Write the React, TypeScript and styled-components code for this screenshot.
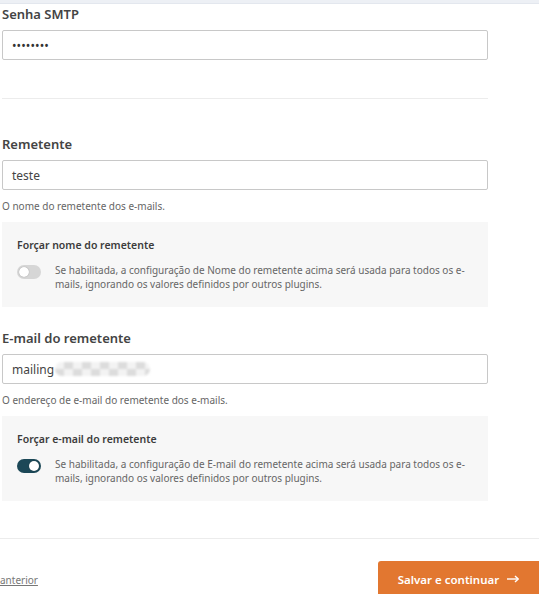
import React from "react";
import styled, { createGlobalStyle } from "styled-components";

const Global = createGlobalStyle`
  html, body { margin: 0; padding: 0; background: #fff; }
  body { font-family: "Noto Sans", "Open Sans", sans-serif; color: #333; width: 539px; overflow: hidden; }
`;

const TopBar = styled.div`
  height: 3px;
  background: #edf0f5;
  border-bottom: 1px solid #e3e7ee;
`;

const Column = styled.div`
  width: 486px;
  margin-left: 2px;
`;

const Field = styled.div`
  display: flex;
  flex-direction: column;
`;

const Label = styled.label<{ $top?: number }>`
  font-size: 13px;
  font-weight: 600;
  color: #444;
  margin-top: ${(p) => p.$top ?? 0}px;
  line-height: 18px;
  margin-bottom: 7px;
`;

const Input = styled.div`
  height: 30px;
  box-sizing: border-box;
  border: 1px solid #c8c8c8;
  border-radius: 2px;
  display: flex;
  align-items: center;
  padding: 0 9px;
  font-size: 12px;
  color: #444;
`;

const Dots = styled.span`
  font-size: 12px;
  letter-spacing: 0.1px;
  color: #333;
`;

const Blur = styled.span`
  display: inline-block;
  width: 95px;
  height: 14px;
  margin-left: 1px;
  border-radius: 7px;
  background: repeating-conic-gradient(#dcdcdc 0 25%, #f3f3f3 0 50%) 0 0 / 18px 14px;
  filter: blur(1px);
`;

const Divider = styled.hr<{ $full?: boolean }>`
  border: 0;
  border-top: 1px solid #ececec;
  margin: 0;
  width: ${(p) => (p.$full ? "539px" : "486px")};
`;

const Spacer = styled.div<{ $h: number }>`
  height: ${(p) => p.$h}px;
`;

const Help = styled.p`
  font-size: 10px;
  color: #666;
  margin: 9px 0 0;
  line-height: 14px;
`;

const Option = styled.div`
  background: #f7f7f7;
  margin-top: 9px;
  padding: 16px 15px 16px;
`;

const OptionTitle = styled.div`
  font-size: 10.5px;
  font-weight: 600;
  color: #3c3c3c;
  line-height: 14px;
  margin-bottom: 11px;
`;

const OptionRow = styled.div`
  display: flex;
  align-items: flex-start;
  gap: 14px;
`;

const Toggle = styled.span<{ $on?: boolean }>`
  flex: none;
  position: relative;
  width: 24px;
  height: 14px;
  border-radius: 7px;
  margin-top: 2px;
  background: ${(p) => (p.$on ? "#1c4857" : "#d6d6d6")};
  &::after {
    content: "";
    position: absolute;
    top: 2px;
    left: ${(p) => (p.$on ? "12px" : "2px")};
    width: 10px;
    height: 10px;
    border-radius: 50%;
    background: #fff;
    box-shadow: 0 0 1px rgba(0, 0, 0, 0.4);
  }
`;

const OptionText = styled.p`
  margin: 0;
  font-size: 10px;
  color: #666;
  line-height: 14px;
  max-width: 410px;
`;

const Footer = styled.div`
  display: flex;
  justify-content: space-between;
  align-items: flex-start;
  padding-top: 22px;
`;

const BackLink = styled.a`
  font-size: 10px;
  color: #777;
  text-decoration: underline;
  margin-top: 12px;
`;

const Primary = styled.button`
  background: #e27730;
  color: #fff;
  border: 0;
  border-radius: 3px 0 0 0;
  font-family: inherit;
  font-size: 11.5px;
  font-weight: 600;
  width: 161px;
  height: 40px;
  padding: 0 0 4px;
  display: flex;
  align-items: center;
  justify-content: center;
  gap: 8px;
`;

const Arrow = () => (
  <svg width="12" height="8" viewBox="0 0 12 8" fill="none">
    <path d="M0 4h10.5" stroke="#fff" strokeWidth="1.4" />
    <path d="M8 1l3.2 3L8 7" stroke="#fff" strokeWidth="1.4" fill="none" />
  </svg>
);

export default function App() {
  return (
    <>
      <Global />
      <TopBar />
      <Column>
        <Field>
          <Label $top={1}>Senha SMTP</Label>
          <Input>
            <Dots>••••••••</Dots>
          </Input>
        </Field>
        <Spacer $h={38} />
        <Divider />
        <Field>
          <Label $top={36}>Remetente</Label>
          <Input>teste</Input>
          <Help>O nome do remetente dos e-mails.</Help>
        </Field>
        <Option>
          <OptionTitle>Forçar nome do remetente</OptionTitle>
          <OptionRow>
            <Toggle />
            <OptionText>
              Se habilitada, a configuração de Nome do remetente acima será usada para todos os e-mails,
              ignorando os valores definidos por outros plugins.
            </OptionText>
          </OptionRow>
        </Option>
        <Field>
          <Label $top={22}>E-mail do remetente</Label>
          <Input>
            mailing
            <Blur />
          </Input>
          <Help>O endereço de e-mail do remetente dos e-mails.</Help>
        </Field>
        <Option>
          <OptionTitle>Forçar e-mail do remetente</OptionTitle>
          <OptionRow>
            <Toggle $on />
            <OptionText>
              Se habilitada, a configuração de E-mail do remetente acima será usada para todos os e-mails,
              ignorando os valores definidos por outros plugins.
            </OptionText>
          </OptionRow>
        </Option>
      </Column>
      <Spacer $h={37} />
      <Divider $full />
      <Footer>
        <BackLink href="#">anterior</BackLink>
        <Primary>
          Salvar e continuar <Arrow />
        </Primary>
      </Footer>
    </>
  );
}
